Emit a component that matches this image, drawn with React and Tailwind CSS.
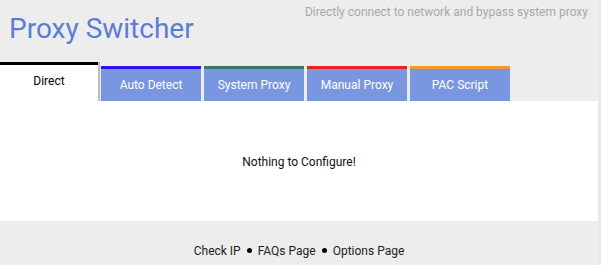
export default function App() {
    const tabs = [
        { label: 'Auto Detect', border: 'border-[#3311ee]' },
        { label: 'System Proxy', border: 'border-[#3d7566]' },
        { label: 'Manual Proxy', border: 'border-[#ee2222]' },
        { label: 'PAC Script', border: 'border-[#f09a30]' },
    ];

    return (
        <div className="flex w-[601px] h-[265px] overflow-hidden font-['Roboto',sans-serif]">
            <div className="w-[598px] flex flex-col bg-[#ededed]">
                {/* Header */}
                <div className="h-[62px] flex justify-between">
                    <h1 className="pt-[13px] pl-[9px] text-[28px] leading-[32px] text-[#5b7dd6]">Proxy Switcher</h1>
                    <p className="pt-[5px] pr-[10px] text-[12px] leading-[14px] text-[#a8a8a8]">Directly connect to network and bypass system proxy</p>
                </div>

                {/* Tabs */}
                <div className="h-[39px] flex items-end gap-[3px]">
                    <div className="w-[98px] h-[39px] bg-white border-t-[3px] border-black shadow-[2px_0_0_#bdbdbd] pt-[9px] text-center text-[12px] leading-[14px] text-black">
                        Direct
                    </div>
                    {tabs.map(t => (
                        <div key={t.label} className={`w-[100px] h-[35px] border-t-[3px] ${t.border} bg-[#7897e0] flex items-center justify-center text-[12px] text-white`}>
                            {t.label}
                        </div>
                    ))}
                </div>

                {/* Content */}
                <div className="h-[120px] bg-white flex items-center justify-center pt-[2px] text-[12px] text-[#111]">
                    Nothing to Configure!
                </div>

                {/* Footer */}
                <div className="flex-1 flex items-center justify-center pt-[15px] text-[12px] leading-[14px] text-[#222]">
                    <span>Check IP</span>
                    <span className="mx-[6px] w-[5px] h-[5px] rounded-full bg-black" />
                    <span>FAQs Page</span>
                    <span className="mx-[6px] w-[5px] h-[5px] rounded-full bg-black" />
                    <span>Options Page</span>
                </div>
            </div>
            <div className="w-[3px] bg-[#e1e9f1]" />
        </div>
    );
}
